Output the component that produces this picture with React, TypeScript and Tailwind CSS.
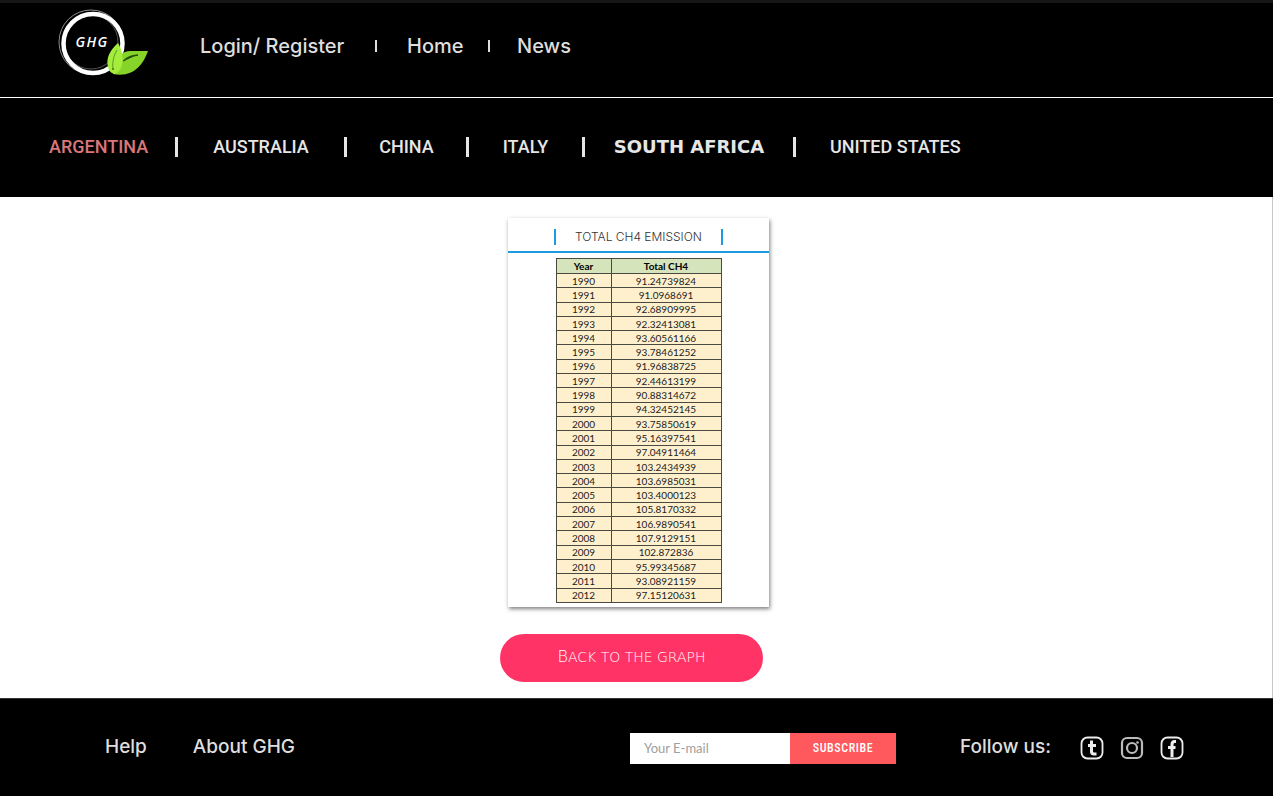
import React from "react";

const emissions: [number, string][] = [
  [1990, "91.24739824"],
  [1991, "91.0968691"],
  [1992, "92.68909995"],
  [1993, "92.32413081"],
  [1994, "93.60561166"],
  [1995, "93.78461252"],
  [1996, "91.96838725"],
  [1997, "92.44613199"],
  [1998, "90.88314672"],
  [1999, "94.32452145"],
  [2000, "93.75850619"],
  [2001, "95.16397541"],
  [2002, "97.04911464"],
  [2003, "103.2434939"],
  [2004, "103.6985031"],
  [2005, "103.4000123"],
  [2006, "105.8170332"],
  [2007, "106.9890541"],
  [2008, "107.9129151"],
  [2009, "102.872836"],
  [2010, "95.99345687"],
  [2011, "93.08921159"],
  [2012, "97.15120631"],
];

const countries = [
  { name: "ARGENTINA", style: "w-[126px] text-[#d9777a]" },
  { name: "AUSTRALIA", style: "w-[166px] text-center text-[#e6e6e6]" },
  { name: "CHINA", style: "w-[119px] text-center text-[#e6e6e6]" },
  { name: "ITALY", style: "w-[113px] text-center text-[#e6e6e6]" },
  {
    name: "SOUTH AFRICA",
    style: "w-[208px] text-center font-['DejaVu_Sans',sans-serif] font-bold text-[#e6e6e6]",
  },
  { name: "UNITED STATES", style: "pl-[34px] text-[#e6e6e6]" },
];

function Logo() {
  return (
    <svg width="92" height="68" viewBox="0 0 92 68" role="img" aria-label="GHG">
      <circle cx="34" cy="34" r="32" fill="none" stroke="#8d8d8d" strokeWidth="1" />
      <circle cx="34" cy="34" r="27" fill="none" stroke="#555" strokeWidth="1" />
      <circle cx="36" cy="35.5" r="29.5" fill="none" stroke="#fff" strokeWidth="4.5" />
      <text
        x="35"
        y="39"
        textAnchor="middle"
        fill="#fff"
        className="font-['Open_Sans',sans-serif] text-[14px] font-semibold italic tracking-widest"
      >
        GHG
      </text>
      <path d="M56 66C58 49 65 42 76 43C82 43 87 43 91 43C86 57 76 70 56 66Z" fill="#86d32a" />
      <path d="M61 35C52 43 49 51 51 59C52 64 56 66 58 66C67 62 68 47 61 35Z" fill="#a4ed3d" />
      <path d="M66 53C70 49 75 47 81 47C75 48 71 51 66 53Z" fill="#234b08" stroke="#234b08" />
      <path d="M56 61C55 54 57 47 60 42" fill="none" stroke="#5c9920" />
      <circle cx="56" cy="61" r="1" fill="#447411" />
    </svg>
  );
}

function SocialFrame({ label, children }: { label: string; children: React.ReactNode }) {
  return (
    <a href="#" aria-label={label}>
      <svg width="24" height="24" viewBox="0 0 24 24" fill="none" stroke="#eee">
        {children}
      </svg>
    </a>
  );
}

export default function App() {
  return (
    <div className="flex min-h-screen flex-col bg-black font-['Inter',sans-serif]">
      <header className="flex h-[98px] items-center border-t-[3px] border-b border-t-[#151716] border-b-white pb-2 pl-[57px]">
        <a href="#" className="mt-1 mb-3">
          <Logo />
        </a>
        <nav className="ml-[51px] flex items-center text-[20px] font-medium text-[#dedede]">
          <a href="#" className="w-[145px] whitespace-nowrap">Login/ Register</a>
          <span className="mx-[30px] h-3 w-[2px] bg-[#dedede]" />
          <a href="#" className="w-[54px] whitespace-nowrap">Home</a>
          <span className="mx-[27px] h-3 w-[2px] bg-[#dedede]" />
          <a href="#" className="whitespace-nowrap">News</a>
        </nav>
      </header>

      <nav className="flex h-[99px] items-center pb-[2px] pl-[49px] font-['Roboto',sans-serif] text-[18px] font-medium">
        {countries.map((c, i) => (
          <React.Fragment key={c.name}>
            {i > 0 && <span className="h-5 w-[3px] bg-[#e6e6e6]" />}
            <a href="#" className={`${c.style} whitespace-nowrap`}>
              {c.name}
            </a>
          </React.Fragment>
        ))}
      </nav>

      <main className="flex grow justify-center border-r border-[#c8c8c8] bg-white pt-[21px] pr-[3px] pb-4">
        <div className="flex w-[269px] flex-col">
          <section className="w-[261px] self-end bg-white pb-1 shadow-[1px_2px_4px_rgba(0,0,0,0.5)]">
            <div className="flex h-[35px] items-center justify-center border-b-2 border-[#1b9ce0] pt-1">
              <h1 className="w-[169px] border-x-2 border-[#1b9ce0] text-center text-[12px] leading-4 font-light text-[#333]">
                TOTAL CH4 EMISSION
              </h1>
            </div>
            <table className="mx-auto mt-[5px] h-[345px] w-[166px] table-fixed border-collapse text-center font-['Lato',sans-serif] text-[10px] leading-[10px] text-[#222]">
              <thead>
                <tr className="h-[15px] bg-[#d6e4bc] text-black">
                  <th className="w-[55px] border border-[#4a4a42] p-0">Year</th>
                  <th className="border border-[#4a4a42] p-0">Total CH4</th>
                </tr>
              </thead>
              <tbody>
                {emissions.map(([year, total]) => (
                  <tr key={year} className="bg-[#fff0cd]">
                    <td className="border border-[#4a4a42] p-0">{year}</td>
                    <td className="border border-[#4a4a42] p-0">{total}</td>
                  </tr>
                ))}
              </tbody>
            </table>
          </section>
          <button
            type="button"
            className="mt-[27px] h-12 w-[263px] rounded-full bg-[#ff3366] pb-[2px] font-['DejaVu_Sans',sans-serif] text-[14px] text-white"
          >
            <span className="inline-block font-extralight uppercase first-letter:text-[16px]">
              Back to the graph
            </span>
          </button>
        </div>
      </main>

      <footer className="flex h-[98px] items-center justify-between border-t border-[#333] pr-[89px] pl-[105px] text-[19px] font-medium text-[#dedede]">
        <nav className="flex gap-[46px]">
          <a href="#">Help</a>
          <a href="#">About GHG</a>
        </nav>
        <div className="flex items-center gap-16">
          <form className="mt-[2px] flex h-[31px]" onSubmit={(e) => e.preventDefault()}>
            <input
              type="email"
              aria-label="Your E-mail"
              placeholder="Your E-mail"
              className="w-[160px] bg-white px-[14px] font-['Lato',sans-serif] text-[13px] font-normal text-black placeholder:text-[#a0a0a0]"
            />
            <button
              type="submit"
              className="w-[106px] bg-[#ff585d] pb-[2px] font-['Roboto_Condensed','Roboto',sans-serif] text-[12px] font-medium tracking-wider text-white"
            >
              SUBSCRIBE
            </button>
          </form>
          <div className="flex items-center">
            <span className="w-[120px]">Follow us:</span>
            <div className="flex gap-4">
              <SocialFrame label="Tumblr">
                <rect x="1.5" y="1.5" width="21" height="21" rx="6" strokeWidth="1.8" />
                <path d="M11.5 4.5V15.5Q11.5 18 14 18H16.5M8 9.5H16" strokeWidth="3" />
              </SocialFrame>
              <SocialFrame label="Instagram">
                <rect x="2" y="2" width="20" height="20" rx="5" stroke="#bbb" strokeWidth="2.2" />
                <circle cx="12" cy="12" r="5" stroke="#bbb" strokeWidth="2.2" />
                <circle cx="17.5" cy="6.5" r="1.3" fill="#bbb" stroke="none" />
              </SocialFrame>
              <SocialFrame label="Facebook">
                <rect x="1.5" y="1.5" width="21" height="21" rx="6" strokeWidth="1.8" />
                <path d="M16 5.5H14.5Q12 5.5 12 8.5V21M8 11.5H15.5" strokeWidth="3" />
              </SocialFrame>
            </div>
          </div>
        </div>
      </footer>
    </div>
  );
}
